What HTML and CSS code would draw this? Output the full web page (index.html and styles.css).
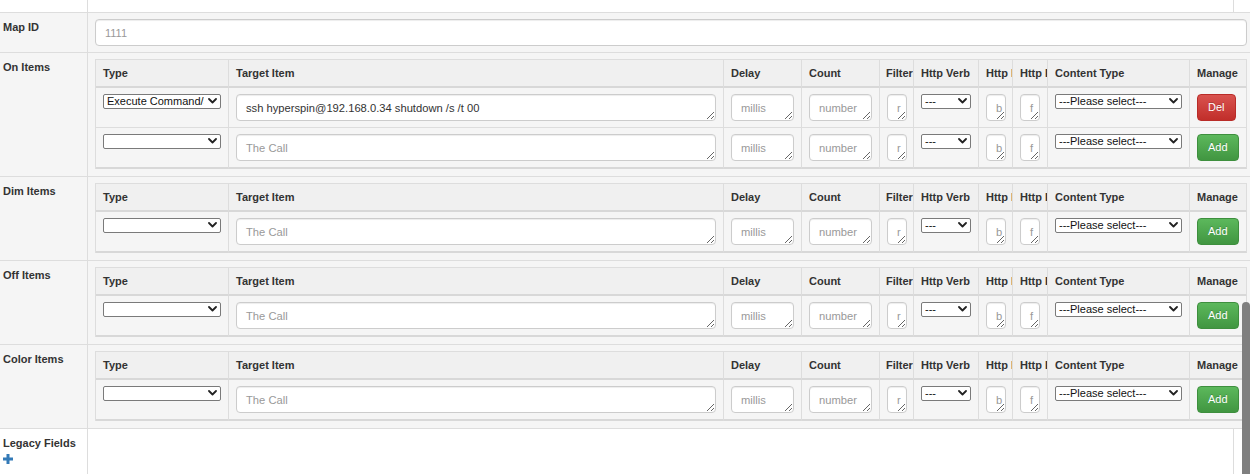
FILE: index.html
```html
<!DOCTYPE html>
<html lang="en">
<head>
    <meta charset="UTF-8">
    <meta name="viewport" content="width=device-width, initial-scale=1.0">
    <title>Device Mapping</title>
    <link rel="stylesheet" href="styles.css">
</head>
<body>
    <table class="mapping">
        <tr class="blank-row">
            <td class="cell label"></td>
            <td class="cell main"></td>
            <td class="cell edge"></td>
        </tr>
        <tr class="shaded">
            <td class="cell label">Map ID</td>
            <td class="cell field map-field" colspan="2">
                <input type="text" class="form-control" placeholder="1111">
            </td>
        </tr>
        <tr class="shaded">
            <td class="cell label">On Items</td>
            <td class="cell field" colspan="2"><table class="items" id="onItems"></table></td>
        </tr>
        <tr class="shaded">
            <td class="cell label">Dim Items</td>
            <td class="cell field" colspan="2"><table class="items" id="dimItems"></table></td>
        </tr>
        <tr class="shaded">
            <td class="cell label">Off Items</td>
            <td class="cell field" colspan="2"><table class="items" id="offItems"></table></td>
        </tr>
        <tr class="shaded">
            <td class="cell label">Color Items</td>
            <td class="cell field" colspan="2"><table class="items" id="colorItems"></table></td>
        </tr>
        <tr class="legacy-row">
            <td class="cell label">
                Legacy Fields
                <svg class="plus" width="10" height="10" viewBox="0 0 10 10">
                    <path d="M3.5 0h3v3.5H10v3H6.5V10h-3V6.5H0v-3h3.5z" fill="#337ab7"/>
                </svg>
            </td>
            <td class="cell main"></td>
            <td class="cell edge"></td>
        </tr>
    </table>

    <div class="scroll-thumb"></div>

    <script>
        // columns of every item table
        const columns = [
            { name: 'Type', cls: 'w-type' },
            { name: 'Target Item', cls: 'w-target' },
            { name: 'Delay', cls: 'w-delay' },
            { name: 'Count', cls: 'w-count' },
            { name: 'Filter', cls: 'w-filter' },
            { name: 'Http Verb', cls: 'w-verb' },
            { name: 'Http Body', cls: 'w-http' },
            { name: 'Http Form', cls: 'w-http2' },
            { name: 'Content Type', cls: 'w-content' },
            { name: 'Manage', cls: 'w-manage' }
        ];

        const chevron = '<svg class="chev" width="9" height="6" viewBox="0 0 9 6"><path d="M1 1l3.5 3.5L8 1" stroke="#222" stroke-width="1.8" fill="none" stroke-linecap="round" stroke-linejoin="round"/></svg>';

        function selectBox(text) {
            return `<span class="select">
                <select><option>${text}</option></select>${chevron}
            </span>`;
        }

        function itemRow(item) {
            const target = item.target
                ? `<textarea>${item.target}</textarea>`
                : `<textarea placeholder="The Call"></textarea>`;
            const button = item.saved
                ? `<button class="btn btn-danger">Del</button>`
                : `<button class="btn btn-success">Add</button>`;
            return `<tr>
                <td>${selectBox(item.type || '')}</td>
                <td>${target}</td>
                <td><textarea placeholder="millis"></textarea></td>
                <td><textarea placeholder="number"></textarea></td>
                <td><textarea placeholder="regex"></textarea></td>
                <td>${selectBox('---')}</td>
                <td><textarea placeholder="body"></textarea></td>
                <td><textarea placeholder="fields"></textarea></td>
                <td>${selectBox('---Please select---')}</td>
                <td>${button}</td>
            </tr>`;
        }

        function buildTable(id, items) {
            const table = document.getElementById(id);
            const head = columns.map(c => `<th class="${c.cls}">${c.name}</th>`).join('');
            const rows = items.concat([{}]).map(itemRow).join('');
            table.innerHTML = `<thead><tr>${head}</tr></thead><tbody>${rows}</tbody>`;
        }

        buildTable('onItems', [{
            type: 'Execute Command/Script/Program',
            target: 'ssh hyperspin@192.168.0.34 shutdown /s /t 00',
            saved: true
        }]);
        buildTable('dimItems', []);
        buildTable('offItems', []);
        buildTable('colorItems', []);
    </script>
</body>
</html>
```

FILE: styles.css
```css
html, body {
    margin: 0;
    overflow: hidden;
}
body {
    font-family: "Liberation Sans", Arial, sans-serif;
    font-size: 11px;
    color: #333;
    background-color: #fff;
}
.mapping {
    width: 1250px;
    table-layout: fixed;
    border-collapse: separate;
    border-spacing: 0;
}
.cell {
    padding: 0;
    vertical-align: top;
    border-bottom: 1px solid #ddd;
}
.shaded .cell {
    background-color: #f5f5f5;
}
.cell.label {
    width: 88px;
    box-sizing: border-box;
    padding: 6px 3px;
    border-right: 1px solid #ddd;
    font-weight: bold;
    line-height: 16px;
}
.cell.main {
    border-right: 1px solid #ddd;
}
.cell.edge {
    width: 16px;
}
.blank-row .cell {
    height: 12px;
    padding: 0;
}
.legacy-row .cell {
    height: 60px;
}
.plus {
    display: block;
    margin-top: 3px;
}
.cell.field {
    padding: 6px 3px 7px 7px;
}
.cell.map-field {
    padding-bottom: 6px;
}
.form-control {
    display: block;
    width: 100%;
    height: 27px;
    box-sizing: border-box;
    padding: 5px 9px;
    border: 1px solid #ccc;
    border-radius: 4px;
    background-color: #fff;
    box-shadow: inset 0 1px 1px rgba(0, 0, 0, 0.075);
    font-family: inherit;
    font-size: 11px;
    color: #333;
}
.form-control::placeholder,
textarea::placeholder {
    color: #999;
}

/* item tables */
.items {
    width: 100%;
    table-layout: fixed;
    border-collapse: separate;
    border-spacing: 0;
    border-top: 1px solid #ddd;
    border-left: 1px solid #ddd;
}
.items th,
.items td {
    box-sizing: border-box;
    vertical-align: top;
    border-right: 1px solid #ddd;
    border-bottom: 1px solid #ddd;
}
.items th {
    padding: 5px 7px;
    border-bottom: 2px solid #d8d8d8;
    background-color: #f0f0f0;
    font-weight: bold;
    line-height: 16px;
    text-align: left;
    white-space: nowrap;
    overflow: hidden;
}
.items td {
    padding: 6px 7px;
}
.items tbody tr:last-child td {
    border-bottom: 2px solid #d8d8d8;
}
.w-type { width: 133px; }
.w-target { width: 495px; }
.w-delay { width: 78px; }
.w-count { width: 78px; }
.items th.w-filter { width: 34px; padding-left: 6px; padding-right: 0; }
.w-verb { width: 65px; }
.w-http { width: 34px; }
.w-http2 { width: 35px; }
.w-content { width: 142px; }
.w-manage { width: 57px; }

.items textarea {
    display: block;
    width: 100%;
    height: 27px;
    box-sizing: border-box;
    margin: 0;
    padding: 5px 9px;
    border: 1px solid #ccc;
    border-radius: 4px;
    background-color: #fff;
    box-shadow: inset 0 1px 1px rgba(0, 0, 0, 0.075);
    font-family: inherit;
    font-size: 11.2px;
    line-height: 16px;
    color: #333;
    overflow: hidden;
}
.select {
    display: block;
    position: relative;
}
.select select {
    display: block;
    width: 100%;
    height: 15px;
    box-sizing: border-box;
    margin: 0;
    padding: 0 16px 0 3px;
    border: 1px solid #7a7a7a;
    border-radius: 2px;
    background-color: #fff;
    -webkit-appearance: none;
    appearance: none;
    font-family: inherit;
    font-size: 11px;
    line-height: 13px;
    color: #111;
}
.select .chev {
    position: absolute;
    right: 4px;
    top: 4px;
}
.btn {
    display: inline-block;
    height: 27px;
    margin: 0;
    padding: 0 10px;
    border: 1px solid transparent;
    border-radius: 4px;
    font-family: inherit;
    font-size: 11px;
    line-height: 25px;
    color: #fff;
    text-shadow: 0 -1px 0 rgba(0, 0, 0, 0.2);
    cursor: pointer;
}
.btn-danger {
    background-image: linear-gradient(to bottom, #d9534f 0, #c12e2a 100%);
    border-color: #b92c28;
}
.btn-success {
    background-image: linear-gradient(to bottom, #5cb85c 0, #419641 100%);
    border-color: #3e8f3e;
}
.scroll-thumb {
    position: fixed;
    left: 1242px;
    top: 302px;
    width: 8px;
    height: 200px;
    border-radius: 4px;
    background-color: #7f7f7f;
}
```
